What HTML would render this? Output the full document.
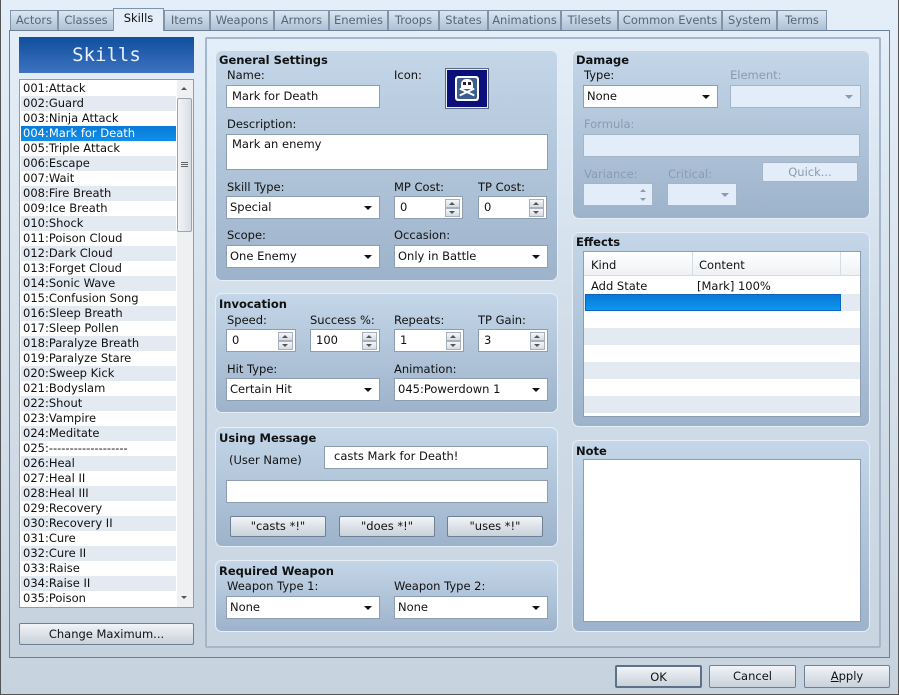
<!DOCTYPE html>
<html><head><meta charset="utf-8"><style>
*{box-sizing:border-box;margin:0;padding:0}
body{width:899px;height:695px;overflow:hidden;font-family:"DejaVu Sans","Liberation Sans",sans-serif;font-size:11px;color:#111;position:relative;background:linear-gradient(#e3eef9 0px,#d9e4ef 300px,#c6d2de 695px)}
.a{position:absolute}
.win{left:0;top:0;width:899px;height:695px;border:1px solid #555;border-top:none}
.tab{top:10px;height:20px;border:1px solid #7f93aa;border-bottom:none;background:linear-gradient(#dbe6f1,#aec0d3);color:#56667a;text-align:center;line-height:19px;font-size:11.5px}
.tab.on{top:8px;height:23px;background:#e3eef9;color:#111;z-index:2}
.pn{border-radius:7px;border:1px solid #e6eef6;background:linear-gradient(#c4d6e8,#9db3cb)}
.h{font-weight:bold;font-size:11.5px}
.f{background:#fff;border:1px solid #8d9db2;height:23px;line-height:21px;padding-left:5px;font-size:11.5px}
.dd::after{content:"";position:absolute;right:7px;top:9px;border-left:4px solid transparent;border-right:4px solid transparent;border-top:4px solid #111}
.dis{background:#e2edf9;border-color:#a6b5c6}
.dis.dd::after{border-top-color:#8a9ab0}
.sp{position:absolute;right:2px;width:15px;height:9px;border:1px solid #a5b1bf;background:linear-gradient(#f4f6f8,#d6dce3)}
.sp.u{top:2px}.sp.d{top:11px}
.sp.u::after,.sp.d::after{content:"";position:absolute;left:3px;border-left:3px solid transparent;border-right:3px solid transparent}
.sp.u::after{top:2px;border-bottom:3px solid #555}
.sp.d::after{top:2px;border-top:3px solid #555}
.lb{font-size:11.5px}
.btn{border:1px solid #6f7f94;border-radius:2px;background:linear-gradient(#f1f4f8,#c9d1da);text-align:center;font-size:11.5px}
.li{left:1px;width:155px;height:15px;line-height:15px;padding-left:2px;font-size:11.5px}
.li.alt{background:#e3eaf2}
.li.sel{background:linear-gradient(#0a7ad8,#0f8fe9);color:#fff}
.gr{color:#8b9ab0}
</style></head><body>
<div class="a win"></div>
<!-- tabs -->
<div class="a tab" style="left:10px;width:48px">Actors</div>
<div class="a tab" style="left:58px;width:56px">Classes</div>
<div class="a tab on" style="left:113px;width:51px">Skills</div>
<div class="a tab" style="left:164px;width:46px">Items</div>
<div class="a tab" style="left:210px;width:64px">Weapons</div>
<div class="a tab" style="left:274px;width:55px">Armors</div>
<div class="a tab" style="left:329px;width:59px">Enemies</div>
<div class="a tab" style="left:388px;width:51px">Troops</div>
<div class="a tab" style="left:439px;width:49px">States</div>
<div class="a tab" style="left:488px;width:73px">Animations</div>
<div class="a tab" style="left:561px;width:57px">Tilesets</div>
<div class="a tab" style="left:618px;width:104px">Common Events</div>
<div class="a tab" style="left:722px;width:55px">System</div>
<div class="a tab" style="left:777px;width:50px">Terms</div>
<!-- main frame -->
<div class="a" style="left:9px;top:30px;width:881px;height:628px;border:1px solid #6d8099;background:linear-gradient(#e3eef9,#d5e0eb 300px,#c5d1dd)"></div>
<div class="a" style="left:205px;top:37px;width:676px;height:611px;border:2px solid #a5b6c8;border-radius:2px;background:linear-gradient(#e3eef9,#d0dce8 300px,#c9d5e1)"></div>
<!-- skills header -->
<div class="a" style="left:19px;top:37px;width:175px;height:36px;background:linear-gradient(#0f4f9c,#3d72c0);color:#e8f0ff;font-family:'DejaVu Sans Mono',monospace;font-size:19px;text-align:center;line-height:36px">Skills</div>
<!-- list -->
<div class="a" style="left:19px;top:79px;width:175px;height:529px;background:#fff;border:1px solid #8d9db2;overflow:hidden">
<div class="a li" style="top:1px">001:Attack</div>
<div class="a li alt" style="top:16px">002:Guard</div>
<div class="a li" style="top:31px">003:Ninja Attack</div>
<div class="a li sel" style="top:46px">004:Mark for Death</div>
<div class="a li" style="top:61px">005:Triple Attack</div>
<div class="a li alt" style="top:76px">006:Escape</div>
<div class="a li" style="top:91px">007:Wait</div>
<div class="a li alt" style="top:106px">008:Fire Breath</div>
<div class="a li" style="top:121px">009:Ice Breath</div>
<div class="a li alt" style="top:136px">010:Shock</div>
<div class="a li" style="top:151px">011:Poison Cloud</div>
<div class="a li alt" style="top:166px">012:Dark Cloud</div>
<div class="a li" style="top:181px">013:Forget Cloud</div>
<div class="a li alt" style="top:196px">014:Sonic Wave</div>
<div class="a li" style="top:211px">015:Confusion Song</div>
<div class="a li alt" style="top:226px">016:Sleep Breath</div>
<div class="a li" style="top:241px">017:Sleep Pollen</div>
<div class="a li alt" style="top:256px">018:Paralyze Breath</div>
<div class="a li" style="top:271px">019:Paralyze Stare</div>
<div class="a li alt" style="top:286px">020:Sweep Kick</div>
<div class="a li" style="top:301px">021:Bodyslam</div>
<div class="a li alt" style="top:316px">022:Shout</div>
<div class="a li" style="top:331px">023:Vampire</div>
<div class="a li alt" style="top:346px">024:Meditate</div>
<div class="a li" style="top:361px">025:-------------------</div>
<div class="a li alt" style="top:376px">026:Heal</div>
<div class="a li" style="top:391px">027:Heal II</div>
<div class="a li alt" style="top:406px">028:Heal III</div>
<div class="a li" style="top:421px">029:Recovery</div>
<div class="a li alt" style="top:436px">030:Recovery II</div>
<div class="a li" style="top:451px">031:Cure</div>
<div class="a li alt" style="top:466px">032:Cure II</div>
<div class="a li" style="top:481px">033:Raise</div>
<div class="a li alt" style="top:496px">034:Raise II</div>
<div class="a li" style="top:511px">035:Poison</div>
<div class="a" style="left:157px;top:0;width:16px;height:527px;background:#eef0f2"></div>
<div class="a" style="left:161px;top:7px;border-left:3px solid transparent;border-right:3px solid transparent;border-bottom:3px solid #555"></div>
<div class="a" style="left:161px;top:516px;border-left:3px solid transparent;border-right:3px solid transparent;border-top:3px solid #555"></div>
<div class="a" style="left:157px;top:18px;width:15px;height:134px;border:1px solid #9aa4b0;border-radius:2px;background:linear-gradient(90deg,#f2f4f6,#d9dee4)"></div>
<div class="a" style="left:161px;top:82px;width:7px;height:5px;border-top:1px solid #666;border-bottom:1px solid #666"></div>
<div class="a" style="left:161px;top:84px;width:7px;height:1px;background:#666"></div>
</div>
<div class="a btn" style="left:19px;top:623px;width:175px;height:22px;line-height:20px">Change Maximum...</div>

<!-- General Settings -->
<div class="a pn" style="left:215px;top:50px;width:343px;height:231px"></div>
<div class="a h" style="left:219px;top:53px">General Settings</div>
<div class="a lb" style="left:227px;top:68px">Name:</div>
<div class="a f" style="left:226px;top:85px;width:154px">Mark for Death</div>
<div class="a lb" style="left:394px;top:68px">Icon:</div>
<div class="a" style="left:446px;top:69px;width:42px;height:39px;border:1px solid #e8eef5;background:#0b0f7a;outline:1px solid #5a6a80">
<div class="a" style="left:8px;top:6px;width:24px;height:25px;background:#fff;border-radius:3px"></div>
<div class="a" style="left:10px;top:8px;width:20px;height:21px;background:#3b5e8e;border-radius:2px"></div>
<div class="a" style="left:14px;top:9px;width:12px;height:10px;background:#fff;border-radius:5px 5px 2px 2px"></div>
<div class="a" style="left:16px;top:12px;width:3px;height:3px;background:#223"></div>
<div class="a" style="left:21px;top:12px;width:3px;height:3px;background:#223"></div>
<div class="a" style="left:12px;top:21px;width:16px;height:2px;background:#fff;transform:rotate(25deg)"></div>
<div class="a" style="left:12px;top:21px;width:16px;height:2px;background:#fff;transform:rotate(-25deg)"></div>
</div>
<div class="a lb" style="left:227px;top:117px">Description:</div>
<div class="a f" style="left:226px;top:134px;width:322px;height:36px;line-height:18px">Mark an enemy</div>
<div class="a lb" style="left:227px;top:180px">Skill Type:</div>
<div class="a f dd" style="left:226px;top:196px;width:154px;padding-left:3px">Special</div>
<div class="a lb" style="left:394px;top:180px">MP Cost:</div>
<div class="a f" style="left:394px;top:196px;width:69px">0<div class="sp u"></div><div class="sp d"></div></div>
<div class="a lb" style="left:478px;top:180px">TP Cost:</div>
<div class="a f" style="left:478px;top:196px;width:69px">0<div class="sp u"></div><div class="sp d"></div></div>
<div class="a lb" style="left:227px;top:228px">Scope:</div>
<div class="a f dd" style="left:226px;top:245px;width:154px;padding-left:3px">One Enemy</div>
<div class="a lb" style="left:394px;top:228px">Occasion:</div>
<div class="a f dd" style="left:394px;top:245px;width:154px;padding-left:3px">Only in Battle</div>

<!-- Invocation -->
<div class="a pn" style="left:215px;top:293px;width:343px;height:120px"></div>
<div class="a h" style="left:219px;top:297px">Invocation</div>
<div class="a lb" style="left:227px;top:313px">Speed:</div>
<div class="a f" style="left:226px;top:329px;width:70px">0<div class="sp u"></div><div class="sp d"></div></div>
<div class="a lb" style="left:310px;top:313px">Success %:</div>
<div class="a f" style="left:310px;top:329px;width:70px">100<div class="sp u"></div><div class="sp d"></div></div>
<div class="a lb" style="left:394px;top:313px">Repeats:</div>
<div class="a f" style="left:394px;top:329px;width:70px">1<div class="sp u"></div><div class="sp d"></div></div>
<div class="a lb" style="left:478px;top:313px">TP Gain:</div>
<div class="a f" style="left:478px;top:329px;width:70px">3<div class="sp u"></div><div class="sp d"></div></div>
<div class="a lb" style="left:227px;top:362px">Hit Type:</div>
<div class="a f dd" style="left:226px;top:378px;width:154px;padding-left:3px">Certain Hit</div>
<div class="a lb" style="left:394px;top:362px">Animation:</div>
<div class="a f dd" style="left:394px;top:378px;width:154px;padding-left:3px">045:Powerdown 1</div>

<!-- Using Message -->
<div class="a pn" style="left:215px;top:427px;width:343px;height:120px"></div>
<div class="a h" style="left:219px;top:431px">Using Message</div>
<div class="a lb" style="left:229px;top:453px">(User Name)</div>
<div class="a f" style="left:324px;top:446px;width:224px;padding-left:9px;line-height:19px">casts Mark for Death!</div>
<div class="a f" style="left:226px;top:480px;width:322px"></div>
<div class="a btn" style="left:230px;top:516px;width:96px;height:21px;line-height:19px">"casts *!"</div>
<div class="a btn" style="left:339px;top:516px;width:96px;height:21px;line-height:19px">"does *!"</div>
<div class="a btn" style="left:447px;top:516px;width:96px;height:21px;line-height:19px">"uses *!"</div>

<!-- Required Weapon -->
<div class="a pn" style="left:215px;top:560px;width:343px;height:72px"></div>
<div class="a h" style="left:219px;top:564px">Required Weapon</div>
<div class="a lb" style="left:227px;top:579px">Weapon Type 1:</div>
<div class="a f dd" style="left:226px;top:596px;width:154px;padding-left:3px">None</div>
<div class="a lb" style="left:394px;top:579px">Weapon Type 2:</div>
<div class="a f dd" style="left:394px;top:596px;width:154px;padding-left:3px">None</div>

<!-- Damage -->
<div class="a pn" style="left:572px;top:50px;width:298px;height:169px"></div>
<div class="a h" style="left:576px;top:53px">Damage</div>
<div class="a lb" style="left:584px;top:68px">Type:</div>
<div class="a f dd" style="left:583px;top:85px;width:135px;padding-left:3px">None</div>
<div class="a lb gr" style="left:730px;top:68px">Element:</div>
<div class="a f dd dis" style="left:730px;top:85px;width:131px"></div>
<div class="a lb gr" style="left:584px;top:117px">Formula:</div>
<div class="a f dis" style="left:583px;top:134px;width:277px"></div>
<div class="a lb gr" style="left:584px;top:167px">Variance:</div>
<div class="a f dis" style="left:583px;top:183px;width:70px"><div class="a" style="left:56px;top:5px;border-left:3px solid transparent;border-right:3px solid transparent;border-bottom:3px solid #8a9ab0"></div><div class="a" style="left:56px;top:14px;border-left:3px solid transparent;border-right:3px solid transparent;border-top:3px solid #8a9ab0"></div></div>
<div class="a lb gr" style="left:668px;top:167px">Critical:</div>
<div class="a f dd dis" style="left:667px;top:183px;width:70px"></div>
<div class="a btn gr" style="left:762px;top:162px;width:96px;height:20px;line-height:18px;background:#e2edf9;border-color:#a6b5c6">Quick...</div>

<!-- Effects -->
<div class="a pn" style="left:572px;top:232px;width:298px;height:195px"></div>
<div class="a h" style="left:576px;top:235px">Effects</div>
<div class="a" style="left:583px;top:251px;width:278px;height:166px;background:#fff;border:1px solid #8d9db2;overflow:hidden">
<div class="a" style="left:0;top:0;width:276px;height:24px;background:linear-gradient(#fff,#eef1f4);border-bottom:1px solid #d5dbe2"></div>
<div class="a" style="left:108px;top:0;width:1px;height:24px;background:#d5dbe2"></div>
<div class="a" style="left:256px;top:0;width:1px;height:24px;background:#d5dbe2"></div>
<div class="a lb" style="left:7px;top:6px">Kind</div>
<div class="a lb" style="left:115px;top:6px">Content</div>
<div class="a lb" style="left:7px;top:27px">Add State</div>
<div class="a lb" style="left:113px;top:27px">[Mark] 100%</div>
<div class="a" style="left:0;top:42px;width:276px;height:17px;background:#e3eaf2"></div>
<div class="a" style="left:1px;top:42px;width:256px;height:17px;background:linear-gradient(#0a78d6,#0c98f0);border:1px solid #0a64c0"></div>
<div class="a" style="left:0;top:76px;width:276px;height:17px;background:#e3eaf2"></div>
<div class="a" style="left:0;top:110px;width:276px;height:17px;background:#e3eaf2"></div>
<div class="a" style="left:0;top:144px;width:276px;height:17px;background:#e3eaf2"></div>
</div>

<!-- Note -->
<div class="a pn" style="left:572px;top:440px;width:298px;height:192px"></div>
<div class="a h" style="left:576px;top:444px">Note</div>
<div class="a" style="left:583px;top:459px;width:278px;height:163px;background:#fff;border:1px solid #8d9db2"></div>

<!-- bottom buttons -->
<div class="a btn" style="left:615px;top:665px;width:87px;height:23px;line-height:21px;border:2px solid #5f7089">OK</div>
<div class="a btn" style="left:709px;top:665px;width:87px;height:23px;line-height:21px">Cancel</div>
<div class="a btn" style="left:804px;top:665px;width:86px;height:23px;line-height:21px"><u>A</u>pply</div>
</body></html>
